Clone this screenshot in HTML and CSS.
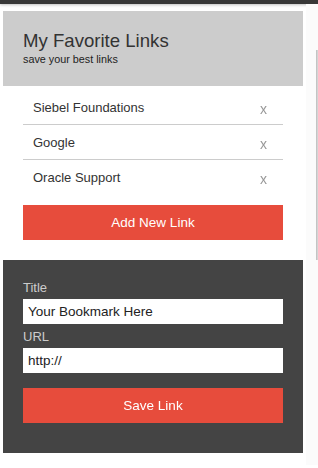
FILE: index.html
```html
<!DOCTYPE html>
<html lang="en">
<head>
    <meta charset="UTF-8">
    <meta name="viewport" content="width=device-width, initial-scale=1.0">
    <title>My Favorite Links</title>
    <link rel="stylesheet" href="styles.css">
</head>
<body>
    <div class="topbar"></div>
    <div class="page">
        <div class="container">
            <div class="header">
                <h1>My Favorite Links</h1>
                <p class="subtitle">save your best links</p>
            </div>

            <ul class="links">
                <li><a href="#">Siebel Foundations</a><span class="remove">x</span></li>
                <li><a href="#">Google</a><span class="remove">x</span></li>
                <li><a href="#">Oracle Support</a><span class="remove">x</span></li>
            </ul>
            <div class="actions">
                <button type="button" class="btn">Add New Link</button>
            </div>

            <form class="new-link">
                <label for="title">Title</label>
                <input type="text" id="title" name="title" value="Your Bookmark Here">

                <label for="url">URL</label>
                <input type="text" id="url" name="url" value="http://" autofocus>

                <button type="button" class="btn save">Save Link</button>
            </form>
        </div>
        <div class="side">
            <div class="side-edge"></div>
        </div>
    </div>
</body>
</html>
```

FILE: styles.css
```css
body {
    font-family: 'Liberation Sans', Arial, sans-serif;
    background-color: #fff;
    margin: 0;
    color: #333;
}
.topbar {
    height: 4px;
    background-color: #383838;
    box-shadow: 0 1px 3px rgba(0, 0, 0, 0.25);
}
.page {
    display: flex;
    padding-top: 7px;
}
.container {
    width: 300px;
    margin-left: 3px;
}
.header {
    background-color: #cccccc;
    padding: 19px 20px 0;
    height: 56px;
}
h1 {
    margin: 0;
    font-size: 18.6px;
    font-weight: normal;
    line-height: 22px;
    color: #333;
}
.subtitle {
    margin: 0;
    font-size: 10.8px;
    line-height: 15px;
    color: #222;
}
.links {
    list-style: none;
    margin: 4px 20px 0;
    padding: 0;
}
.links li {
    display: flex;
    justify-content: space-between;
    padding: 10px 16px 9px 10px;
    line-height: 15px;
    font-size: 13px;
    border-bottom: 1px solid #cccccc;
}
.links li:last-child {
    border-bottom: 1px solid transparent;
}
.links a {
    color: #333;
    text-decoration: none;
}
.remove {
    color: #999;
    font-size: 14px;
    position: relative;
    top: 2px;
}
.actions {
    padding: 10px 20px 0;
}
.btn {
    display: block;
    width: 100%;
    height: 35px;
    border: none;
    background-color: #e74c3c;
    color: #fff;
    font-family: 'Liberation Sans', Arial, sans-serif;
    font-size: 13.5px;
    cursor: pointer;
}
.new-link {
    display: flex;
    flex-direction: column;
    margin-top: 20px;
    background-color: #444444;
    padding: 20px 20px 30px;
}
.new-link label {
    color: #cccccc;
    font-size: 13px;
    line-height: 15px;
    margin-bottom: 4px;
}
.new-link input {
    height: 25px;
    box-sizing: border-box;
    border: none;
    padding: 0 5px;
    font-family: 'Liberation Sans', Arial, sans-serif;
    font-size: 13.5px;
    color: #222;
    margin-bottom: 5px;
    outline: none;
}
.new-link .save {
    margin-top: 10px;
}
.side {
    flex: 1;
    display: flex;
    justify-content: flex-end;
    background-color: #fbfbfb;
    margin-left: 3px;
    margin-top: -7px;
    height: 461px;
}
.side-edge {
    width: 2px;
    margin-top: 46px;
    height: 210px;
    background: linear-gradient(to right, #bbb, #ddd);
}
```
